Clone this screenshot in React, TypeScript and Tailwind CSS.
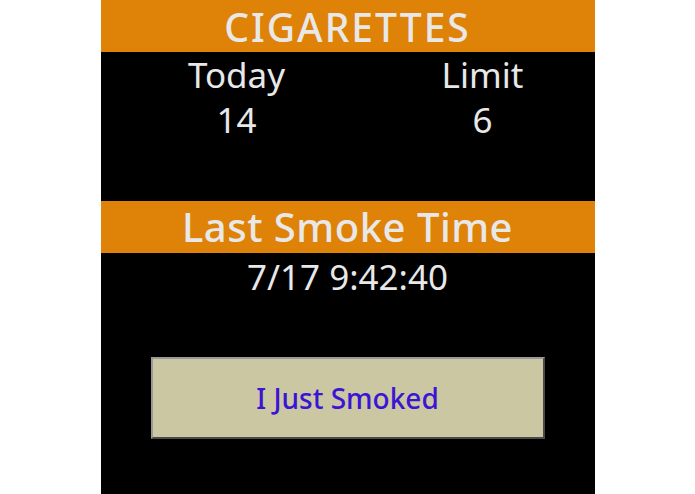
export default function App() {
  return (
    <div className="min-h-screen w-full bg-white flex justify-center">
      <div
        className="w-[494px] h-[494px] bg-black flex flex-col text-[#e8e8e8]"
        style={{ fontFamily: '"Noto Sans", "Open Sans", sans-serif' }}
      >
        <div className="h-[52px] bg-[#de8208] flex items-center justify-center text-[39px] font-medium tracking-[2px] leading-none">
          CIGARETTES
        </div>
        <div className="flex">
          <div className="w-[272px] flex flex-col items-center text-[35px] leading-[45px]">
            <span>Today</span>
            <span>14</span>
          </div>
          <div className="w-[220px] flex flex-col items-center text-[35px] leading-[45px]">
            <span>Limit</span>
            <span>6</span>
          </div>
        </div>
        <div className="mt-[59px] h-[52px] bg-[#de8208] flex items-center justify-center text-[40px] font-medium tracking-[0.5px] leading-none">
          Last Smoke Time
        </div>
        <div className="text-center text-[35px] leading-[48px]">7/17 9:42:40</div>
        <div className="flex justify-center pt-[56px]">
          <button className="w-[394px] h-[82px] bg-[#cac7a2] border-2 border-t-[#9a9a9a] border-l-[#9a9a9a] border-b-[#4a4a4a] border-r-[#4a4a4a] text-[#3b14d4] text-[28px] font-medium">
            I Just Smoked
          </button>
        </div>
      </div>
    </div>
  );
}
